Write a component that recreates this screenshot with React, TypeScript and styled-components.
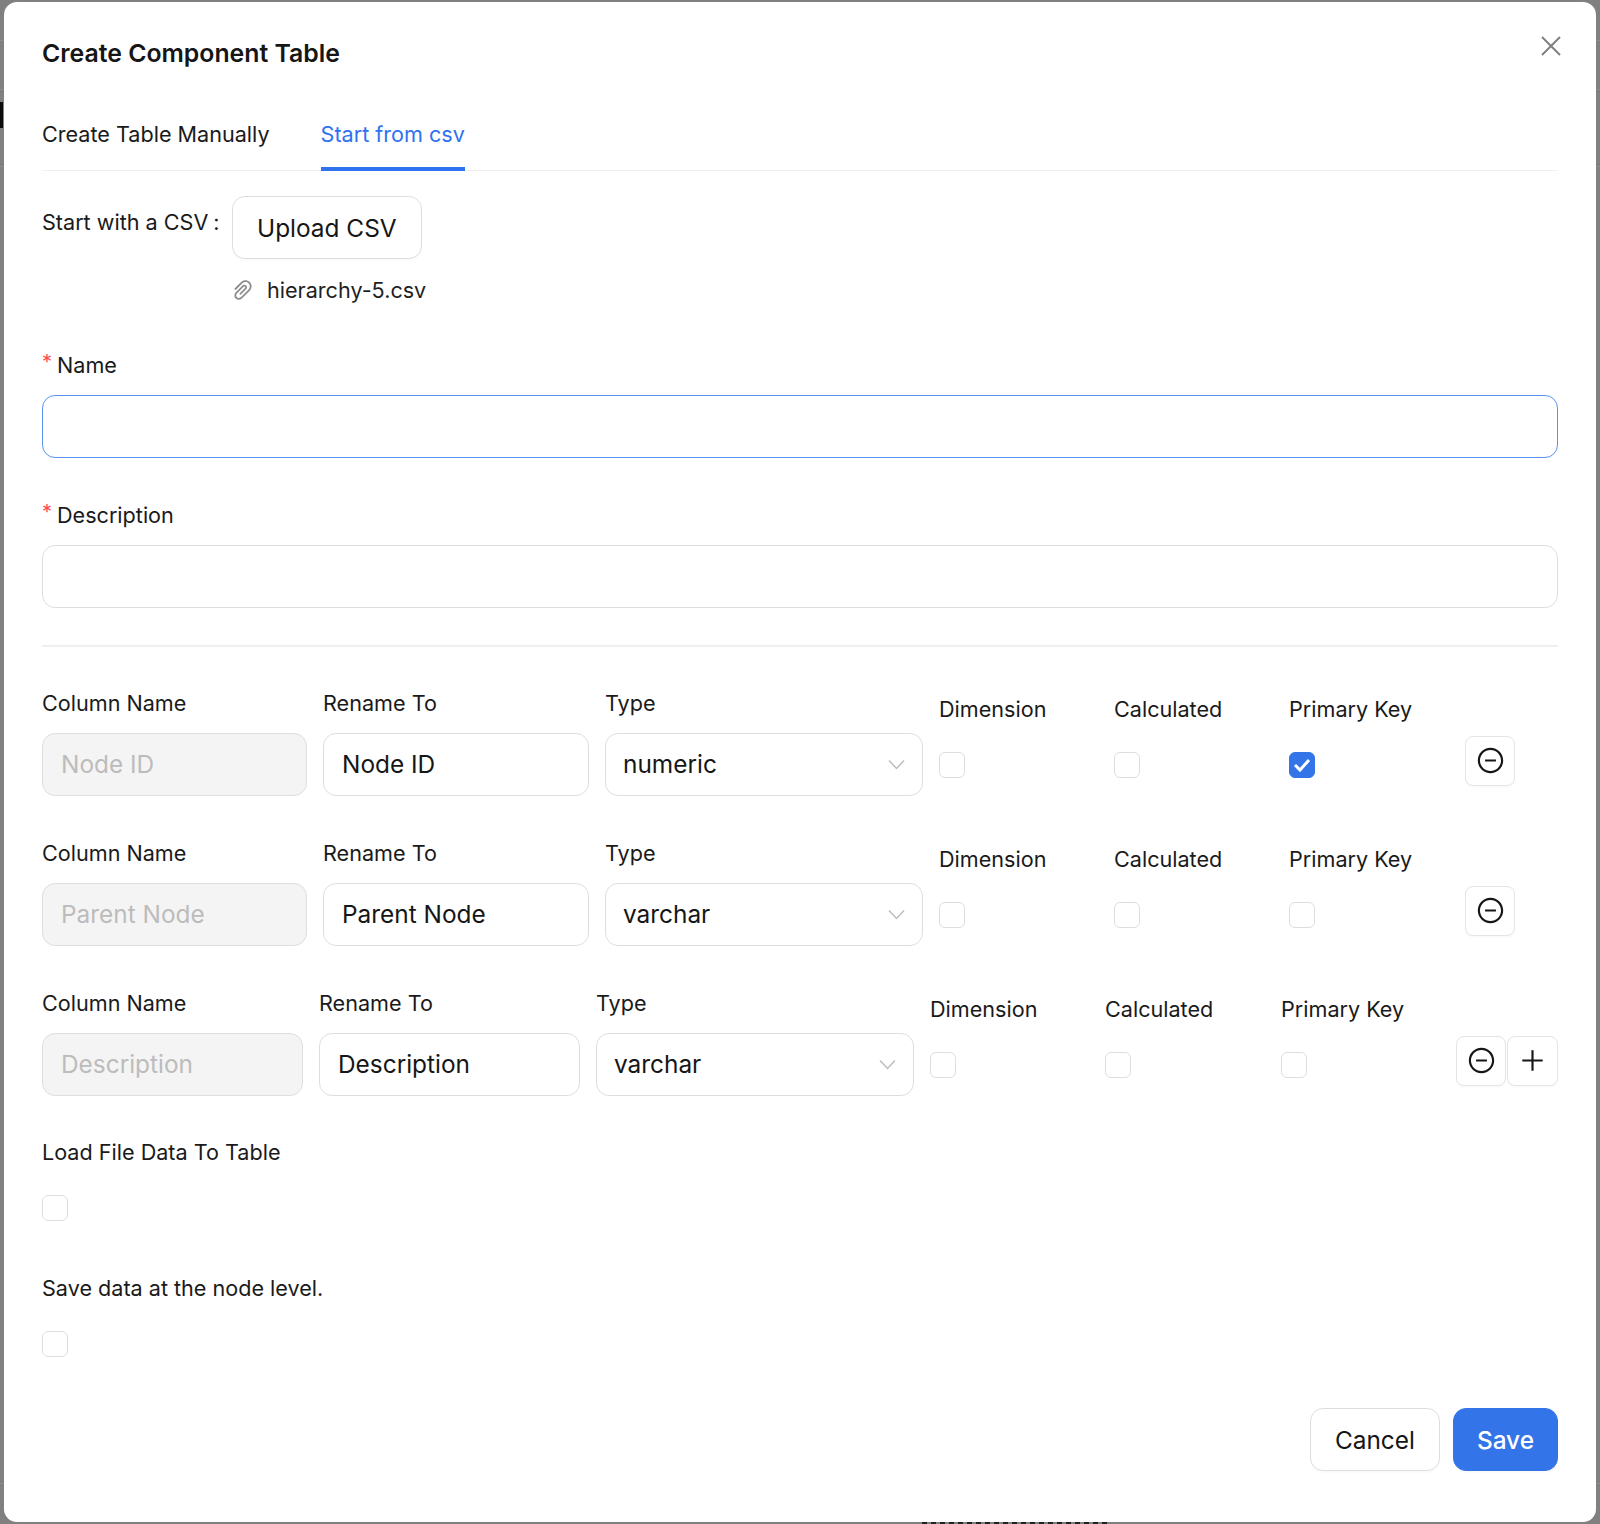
import React from "react";
import styled, { createGlobalStyle } from "styled-components";
import { AiOutlineMinusCircle, AiOutlinePaperClip, AiOutlinePlus } from "react-icons/ai";

const GlobalStyle = createGlobalStyle`
  html, body {
    margin: 0;
    padding: 0;
    background: #808080;
  }
  * {
    box-sizing: border-box;
  }
`;

const Backdrop = styled.div`
  position: relative;
  width: 1600px;
  height: 1524px;
  padding: 2px 4px;
  overflow: hidden;
  background-color: #808080;
  background-image:
    linear-gradient(#8d8d8d, #8d8d8d),
    linear-gradient(#8d8d8d, #8d8d8d),
    linear-gradient(#8d8d8d, #8d8d8d),
    linear-gradient(#8d8d8d, #8d8d8d);
  background-repeat: no-repeat;
  background-size: 100% 1px;
  background-position: 0 40px, 0 89px, 0 166px, 0 1483px;
  font-family: Inter, "Liberation Sans", sans-serif;
  color: #1a1a1a;
`;

// bits of the page behind the dialog that stick out at its edges
const BehindMark = styled.div`
  position: absolute;
  top: 102px;
  left: 0;
  width: 3px;
  height: 26px;
  background: #0c0c0c;
`;

const BehindText = styled.div`
  position: absolute;
  bottom: 0;
  left: 922px;
  width: 188px;
  height: 2px;
  background: repeating-linear-gradient(90deg, #222 0 5px, #808080 5px 9px);
`;

const Modal = styled.div`
  position: relative;
  width: 1592px;
  height: 1520px;
  padding: 36px 38px 0 38px;
  background: #fff;
  border-radius: 13px;
`;

const Title = styled.h2`
  margin: 0;
  font-size: 24.8px;
  font-weight: 600;
  line-height: 30px;
  color: #161616;
`;

const CloseButton = styled.button`
  position: absolute;
  top: 33px;
  right: 34px;
  width: 22px;
  height: 22px;
  padding: 0;
  border: 0;
  background: none;
  color: #7f7f7f;
`;

const Tabs = styled.div`
  display: flex;
  gap: 51px;
  height: 68px;
  margin-top: 35px;
  border-bottom: 1.5px solid #f0f0f0;
`;

const Tab = styled.div<{ $active?: boolean }>`
  height: 68px;
  padding-top: 16px;
  font-size: 21.6px;
  line-height: 30px;
  color: ${(p) => (p.$active ? "#2f72f0" : "#1a1a1a")};
  border-bottom: 4px solid ${(p) => (p.$active ? "#2f72f0" : "transparent")};
`;

const UploadRow = styled.div`
  display: flex;
  margin-top: 25px;
`;

const UploadLabel = styled.div`
  width: 190px;
  padding-top: 11px;
  font-size: 21.6px;
  line-height: 30px;
`;

const Colon = styled.span`
  margin-left: 5px;
`;

const OutlineButton = styled.button`
  height: 63px;
  padding: 0 24px;
  border: 1.5px solid #dedede;
  border-radius: 13px;
  background: #fff;
  box-shadow: 0 2px 1px rgba(0, 0, 0, 0.02);
  font-family: inherit;
  font-size: 24.4px;
  color: #161616;
`;

const FileRow = styled.div`
  display: flex;
  align-items: center;
  gap: 11px;
  height: 30px;
  margin: 16px 0 0 188px;
  font-size: 21.6px;
  color: #1f1f1f;
`;

const Clip = styled(AiOutlinePaperClip)`
  width: 26px;
  height: 26px;
  color: #8c8c8c;
`;

const FieldLabel = styled.label<{ $top: number }>`
  display: block;
  margin-top: ${(p) => p.$top}px;
  font-size: 21.6px;
  line-height: 30px;
  color: #1a1a1a;
`;

const Star = styled.span`
  display: inline-block;
  width: 15px;
  color: #ff4d4f;
  font-size: 20px;
  vertical-align: 4px;
`;

const TextBox = styled.div<{ $focus?: boolean; $muted?: boolean }>`
  display: flex;
  align-items: center;
  height: 63px;
  padding: 0 18px;
  border: 1.5px solid ${(p) => (p.$focus ? "#5b94f0" : "#dedede")};
  border-radius: 13px;
  background: ${(p) => (p.$muted ? "#f4f4f4" : "#fff")};
  font-size: 24.4px;
  color: ${(p) => (p.$muted ? "#bcbcbc" : "#161616")};
`;

const NameBox = styled(TextBox)`
  margin-top: 15px;
`;

const Divider = styled.div`
  height: 1.5px;
  margin-top: 37px;
  background: #f0f0f0;
`;

const ColumnRow = styled.div<{ $tight?: boolean; $top: number }>`
  display: grid;
  grid-template-columns: ${(p) =>
    p.$tight ? "261px 261px 318px 159px 160px 159px auto" : "265px 266px 318px 159px 159px 160px auto"};
  column-gap: 16px;
  margin-top: ${(p) => p.$top}px;
`;

const Cell = styled.div`
  display: flex;
  flex-direction: column;
  gap: 15px;
`;

const CellLabel = styled.div`
  height: 30px;
  font-size: 21.6px;
  line-height: 30px;
  white-space: nowrap;
`;

const SelectBox = styled(TextBox)`
  justify-content: space-between;
  padding: 0 17px;
`;

const CheckCell = styled.div`
  padding-top: 6px;
`;

const CheckBox = styled.span<{ $on?: boolean }>`
  display: flex;
  align-items: center;
  justify-content: center;
  width: 26px;
  height: 26px;
  border: 1.5px solid ${(p) => (p.$on ? "#3374e8" : "#dedede")};
  border-radius: 6px;
  background: ${(p) => (p.$on ? "#3374e8" : "#fff")};
`;

const CheckGap = styled.div`
  margin-top: 28px;
`;

const Actions = styled.div`
  display: flex;
  gap: 1px;
  padding-top: 48px;
`;

const IconButton = styled.button`
  display: flex;
  align-items: center;
  justify-content: center;
  width: 50px;
  height: 50px;
  padding: 0;
  border: 1.5px solid #e4e4e4;
  border-radius: 8px;
  background: #fff;
  box-shadow: 0 2px 1px rgba(0, 0, 0, 0.02);
  color: #161616;
  font-size: 29px;
`;

const AddButton = styled(IconButton)`
  width: 51px;
  flex: none;
`;

const Footer = styled.div`
  position: absolute;
  right: 38px;
  bottom: 51px;
  display: flex;
  gap: 13px;
`;

const SaveButton = styled(OutlineButton)`
  padding: 0 23px;
  border-color: #3374e8;
  background: #3374e8;
  color: #fff;
  font-weight: 500;
`;

const Chevron = () => (
  <svg width="17" height="11" viewBox="0 0 17 11" fill="none" stroke="#bdbdbd" strokeWidth="1.5">
    <polyline points="1,1.5 8.5,9.5 16,1.5" />
  </svg>
);

const Tick = () => (
  <svg width="18" height="14" viewBox="0 0 18 14" fill="none" stroke="#fff" strokeWidth="3">
    <polyline points="2,7 7,12 16,2" />
  </svg>
);

const Cross = () => (
  <svg width="22" height="22" viewBox="0 0 22 22" fill="none" stroke="currentColor" strokeWidth="2">
    <line x1="2" y1="2" x2="20" y2="20" />
    <line x1="20" y1="2" x2="2" y2="20" />
  </svg>
);

type Column = { name: string; type: string; primary?: boolean };

const columns: Column[] = [
  { name: "Node ID", type: "numeric", primary: true },
  { name: "Parent Node", type: "varchar" },
  { name: "Description", type: "varchar" },
];

const rowTops = [41, 42, 42];

export default function App() {
  return (
    <Backdrop>
      <GlobalStyle />
      <BehindMark />
      <BehindText />
      <Modal>
        <Title>Create Component Table</Title>
        <CloseButton aria-label="close">
          <Cross />
        </CloseButton>

        <Tabs>
          <Tab>Create Table Manually</Tab>
          <Tab $active>Start from csv</Tab>
        </Tabs>

        <UploadRow>
          <UploadLabel>
            Start with a CSV<Colon>:</Colon>
          </UploadLabel>
          <OutlineButton>Upload CSV</OutlineButton>
        </UploadRow>
        <FileRow>
          <Clip />
          hierarchy-5.csv
        </FileRow>

        <FieldLabel $top={42}>
          <Star>*</Star>Name
        </FieldLabel>
        <NameBox $focus />
        <FieldLabel $top={39}>
          <Star>*</Star>Description
        </FieldLabel>
        <NameBox />

        <Divider />

        {columns.map((col, i) => {
          const last = i === columns.length - 1;
          return (
            <ColumnRow key={col.name} $tight={last} $top={rowTops[i]}>
              <Cell>
                <CellLabel>Column Name</CellLabel>
                <TextBox $muted>{col.name}</TextBox>
              </Cell>
              <Cell>
                <CellLabel>Rename To</CellLabel>
                <TextBox>{col.name}</TextBox>
              </Cell>
              <Cell>
                <CellLabel>Type</CellLabel>
                <SelectBox>
                  {col.type}
                  <Chevron />
                </SelectBox>
              </Cell>
              <CheckCell>
                <CellLabel>Dimension</CellLabel>
                <CheckGap>
                  <CheckBox />
                </CheckGap>
              </CheckCell>
              <CheckCell>
                <CellLabel>Calculated</CellLabel>
                <CheckGap>
                  <CheckBox />
                </CheckGap>
              </CheckCell>
              <CheckCell>
                <CellLabel>Primary Key</CellLabel>
                <CheckGap>
                  <CheckBox $on={col.primary}>{col.primary && <Tick />}</CheckBox>
                </CheckGap>
              </CheckCell>
              <Actions>
                <IconButton aria-label="remove">
                  <AiOutlineMinusCircle />
                </IconButton>
                {last && (
                  <AddButton aria-label="add">
                    <AiOutlinePlus />
                  </AddButton>
                )}
              </Actions>
            </ColumnRow>
          );
        })}

        <FieldLabel $top={41}>Load File Data To Table</FieldLabel>
        <CheckGap>
          <CheckBox />
        </CheckGap>
        <FieldLabel $top={52}>Save data at the node level.</FieldLabel>
        <CheckGap>
          <CheckBox />
        </CheckGap>

        <Footer>
          <OutlineButton>Cancel</OutlineButton>
          <SaveButton>Save</SaveButton>
        </Footer>
      </Modal>
    </Backdrop>
  );
}
